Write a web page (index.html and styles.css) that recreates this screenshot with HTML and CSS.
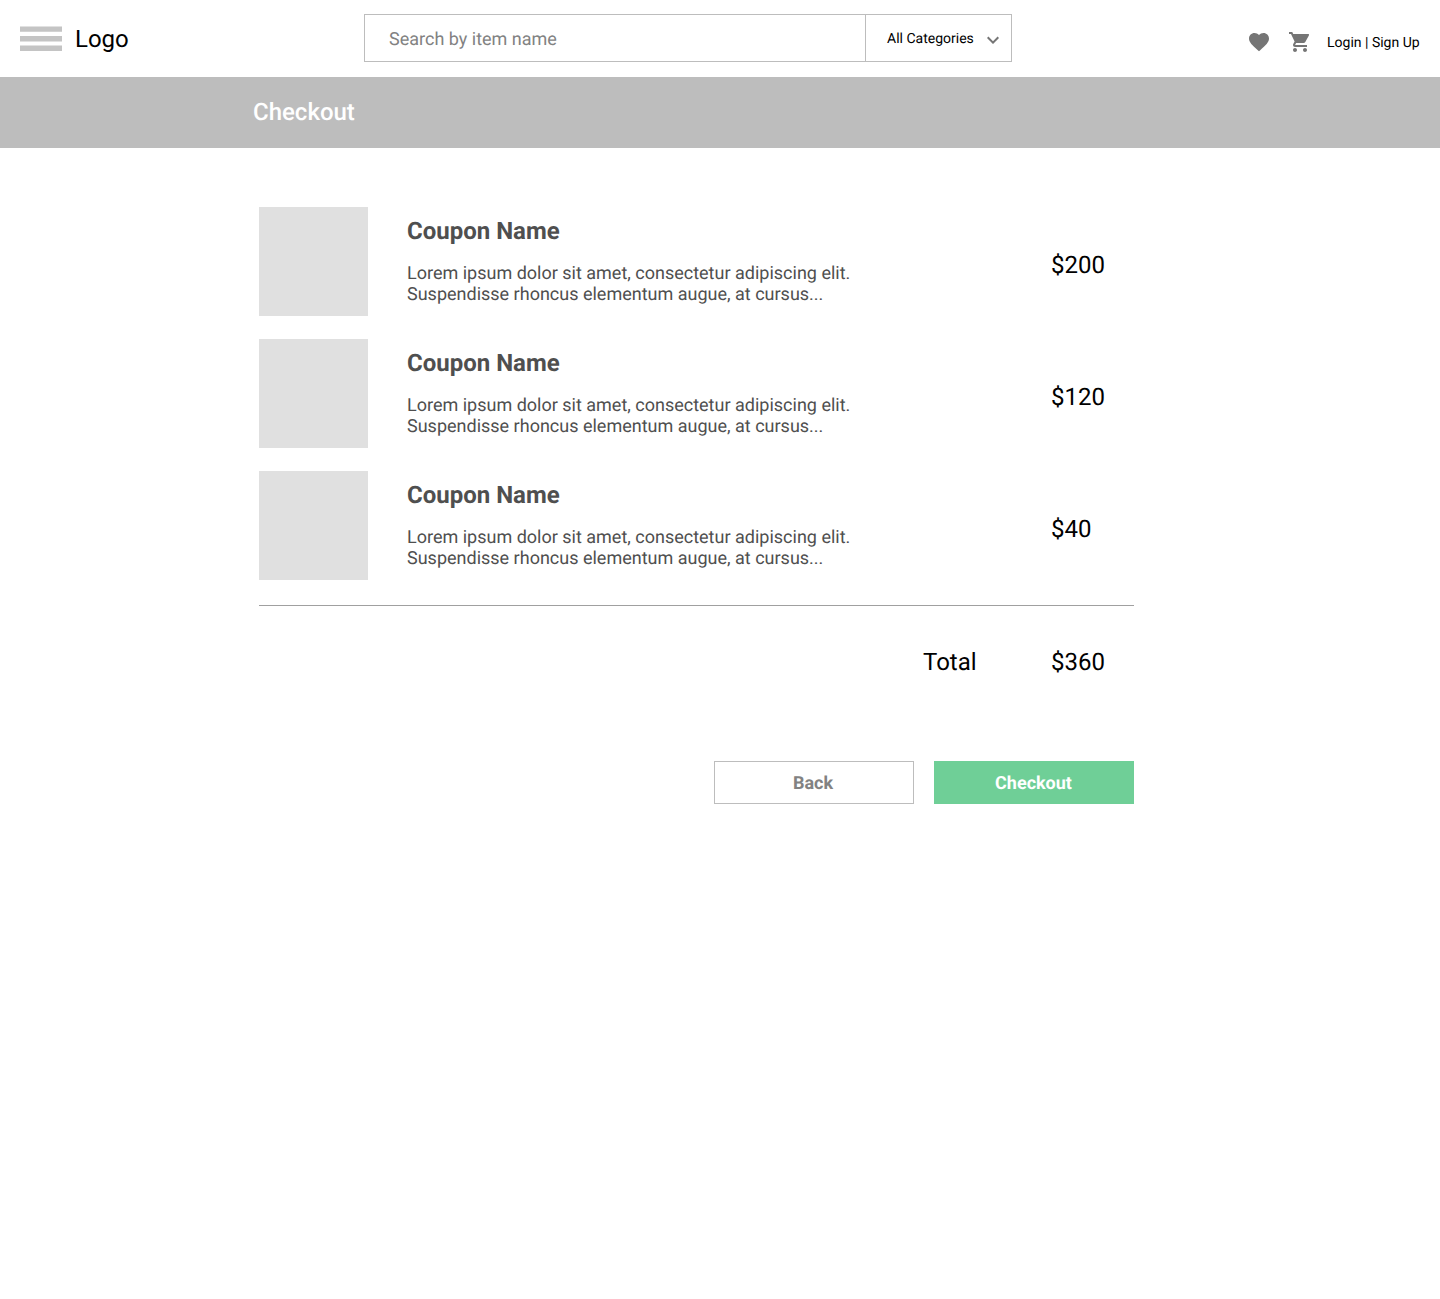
FILE: index.html
```html
<!DOCTYPE html>
<html lang="en">
<head>
<meta charset="utf-8">
<title>Checkout</title>
<link rel="stylesheet" href="styles.css">
</head>
<body>
<header class="topbar">
  <div class="brand">
    <svg class="menu" width="42" height="26" viewBox="0 0 42 26"><path fill="#c4c4c4" d="M0 .4h42v5.4H0zM0 10h42v5.6H0zM0 19.6h42V25H0z"/></svg>
    <span class="logo">Logo</span>
  </div>
  <div class="search">
    <span class="query">Search by item name</span>
    <div class="categories">
      <span>All Categories</span>
      <svg class="chevron" width="24" height="24" viewBox="0 0 24 24"><path fill="#757575" d="M7.41 8.59 12 13.17l4.59-4.58L18 10l-6 6-6-6z"/></svg>
    </div>
  </div>
  <nav class="account">
    <svg class="heart" width="24" height="24" viewBox="0 0 24 24"><path fill="#757575" d="M12 21.35l-1.45-1.32C5.4 15.36 2 12.28 2 8.5 2 5.42 4.42 3 7.5 3c1.74 0 3.41.81 4.5 2.09C13.09 3.81 14.76 3 16.5 3 19.58 3 22 5.42 22 8.5c0 3.78-3.4 6.86-8.55 11.54L12 21.35z"/></svg>
    <svg class="cart" width="24" height="24" viewBox="0 0 24 24"><path fill="#757575" d="M7 18c-1.1 0-1.99.9-1.99 2S5.9 22 7 22s2-.9 2-2-.9-2-2-2zM1 2v2h2l3.6 7.59-1.35 2.45c-.16.28-.25.61-.25.96 0 1.1.9 2 2 2h12v-2H7.42c-.14 0-.25-.11-.25-.25l.03-.12.9-1.63h7.45c.75 0 1.41-.41 1.75-1.03l3.58-6.49A1 1 0 0 0 20 4H5.21l-.94-2H1zm16 16c-1.1 0-1.99.9-1.99 2s.89 2 1.99 2 2-.9 2-2-.9-2-2-2z"/></svg>
    <span class="login">Login | Sign Up</span>
  </nav>
</header>
<div class="titlebar"><h1>Checkout</h1></div>
<main class="order">
  <article class="item">
    <div class="thumb"></div>
    <div class="details"><h2>Coupon Name</h2><p>Lorem ipsum dolor sit amet, consectetur adipiscing elit.<br>Suspendisse rhoncus elementum augue, at cursus...</p></div>
    <span class="price">$200</span>
  </article>
  <article class="item">
    <div class="thumb"></div>
    <div class="details"><h2>Coupon Name</h2><p>Lorem ipsum dolor sit amet, consectetur adipiscing elit.<br>Suspendisse rhoncus elementum augue, at cursus...</p></div>
    <span class="price">$120</span>
  </article>
  <article class="item">
    <div class="thumb"></div>
    <div class="details"><h2>Coupon Name</h2><p>Lorem ipsum dolor sit amet, consectetur adipiscing elit.<br>Suspendisse rhoncus elementum augue, at cursus...</p></div>
    <span class="price">$40</span>
  </article>
  <div class="total"><span class="label">Total</span><span class="sum">$360</span></div>
  <div class="actions"><button class="back">Back</button><button class="confirm">Checkout</button></div>
</main>
</body>
</html>
```
FILE: styles.css
```css
* { box-sizing: border-box; }
body { margin: 0; background: #fff; color: #000; font-family: Roboto, "Liberation Sans", sans-serif; text-rendering: geometricPrecision; }
h1, h2, p { margin: 0; }
svg { display: block; flex: none; }
.topbar { display: grid; grid-template-columns: 364px 648px 1fr; height: 77px; }
.brand { display: flex; align-items: flex-start; padding-left: 20px; }
.menu { margin: 26px 13px 0 0; }
.logo { margin-top: 25px; font-size: 24px; line-height: 28px; }
.search { display: flex; height: 48px; margin-top: 14px; border: 1px solid #bdbdbd; }
.query { flex: 1; padding-left: 24px; font-size: 18px; line-height: 50px; color: #828282; }
.categories { display: flex; width: 146px; padding-left: 21px; border-left: 1px solid #bdbdbd; font-size: 14px; line-height: 48px; }
.chevron { margin: 13px 0 0 7px; }
.account { display: flex; padding: 30px 0 0 235px; font-size: 14px; line-height: 26px; }
.heart { margin-right: 17px; }
.cart { margin-right: 15px; }
.titlebar { height: 71px; padding: 21px 0 0 253px; background: #bdbdbd; }
.titlebar h1 { color: #fff; font-size: 24px; line-height: 28px; font-weight: 500; }
.order { width: 875px; margin: 59px 0 0 259px; }
.item { display: grid; grid-template-columns: 148px 644px 1fr; height: 109px; margin-bottom: 23px; }
.thumb { width: 109px; height: 109px; background: #e0e0e0; }
.details { color: #4f4f4f; padding-top: 10px; }
.details h2 { font-size: 24px; line-height: 28px; font-weight: 700; }
.details p { margin-top: 18px; font-size: 18px; line-height: 21px; }
.price { padding-top: 44px; font-size: 24px; line-height: 28px; }
.total { display: flex; margin-top: 25px; padding: 42px 0 0 664px; border-top: 1px solid #a0a0a0; font-size: 24px; line-height: 28px; }
.label { width: 128px; }
.actions { display: flex; justify-content: flex-end; gap: 20px; margin-top: 85px; }
.actions button { width: 200px; height: 43px; padding: 2px 2px 0 0; border: 1px solid #bdbdbd; background: #fff; color: #828282; font: 700 18px/21px Roboto, "Liberation Sans", sans-serif; text-rendering: geometricPrecision; }
.actions .confirm { padding-right: 1px; border-color: #6fcf97; background: #6fcf97; color: #fff; }
```
